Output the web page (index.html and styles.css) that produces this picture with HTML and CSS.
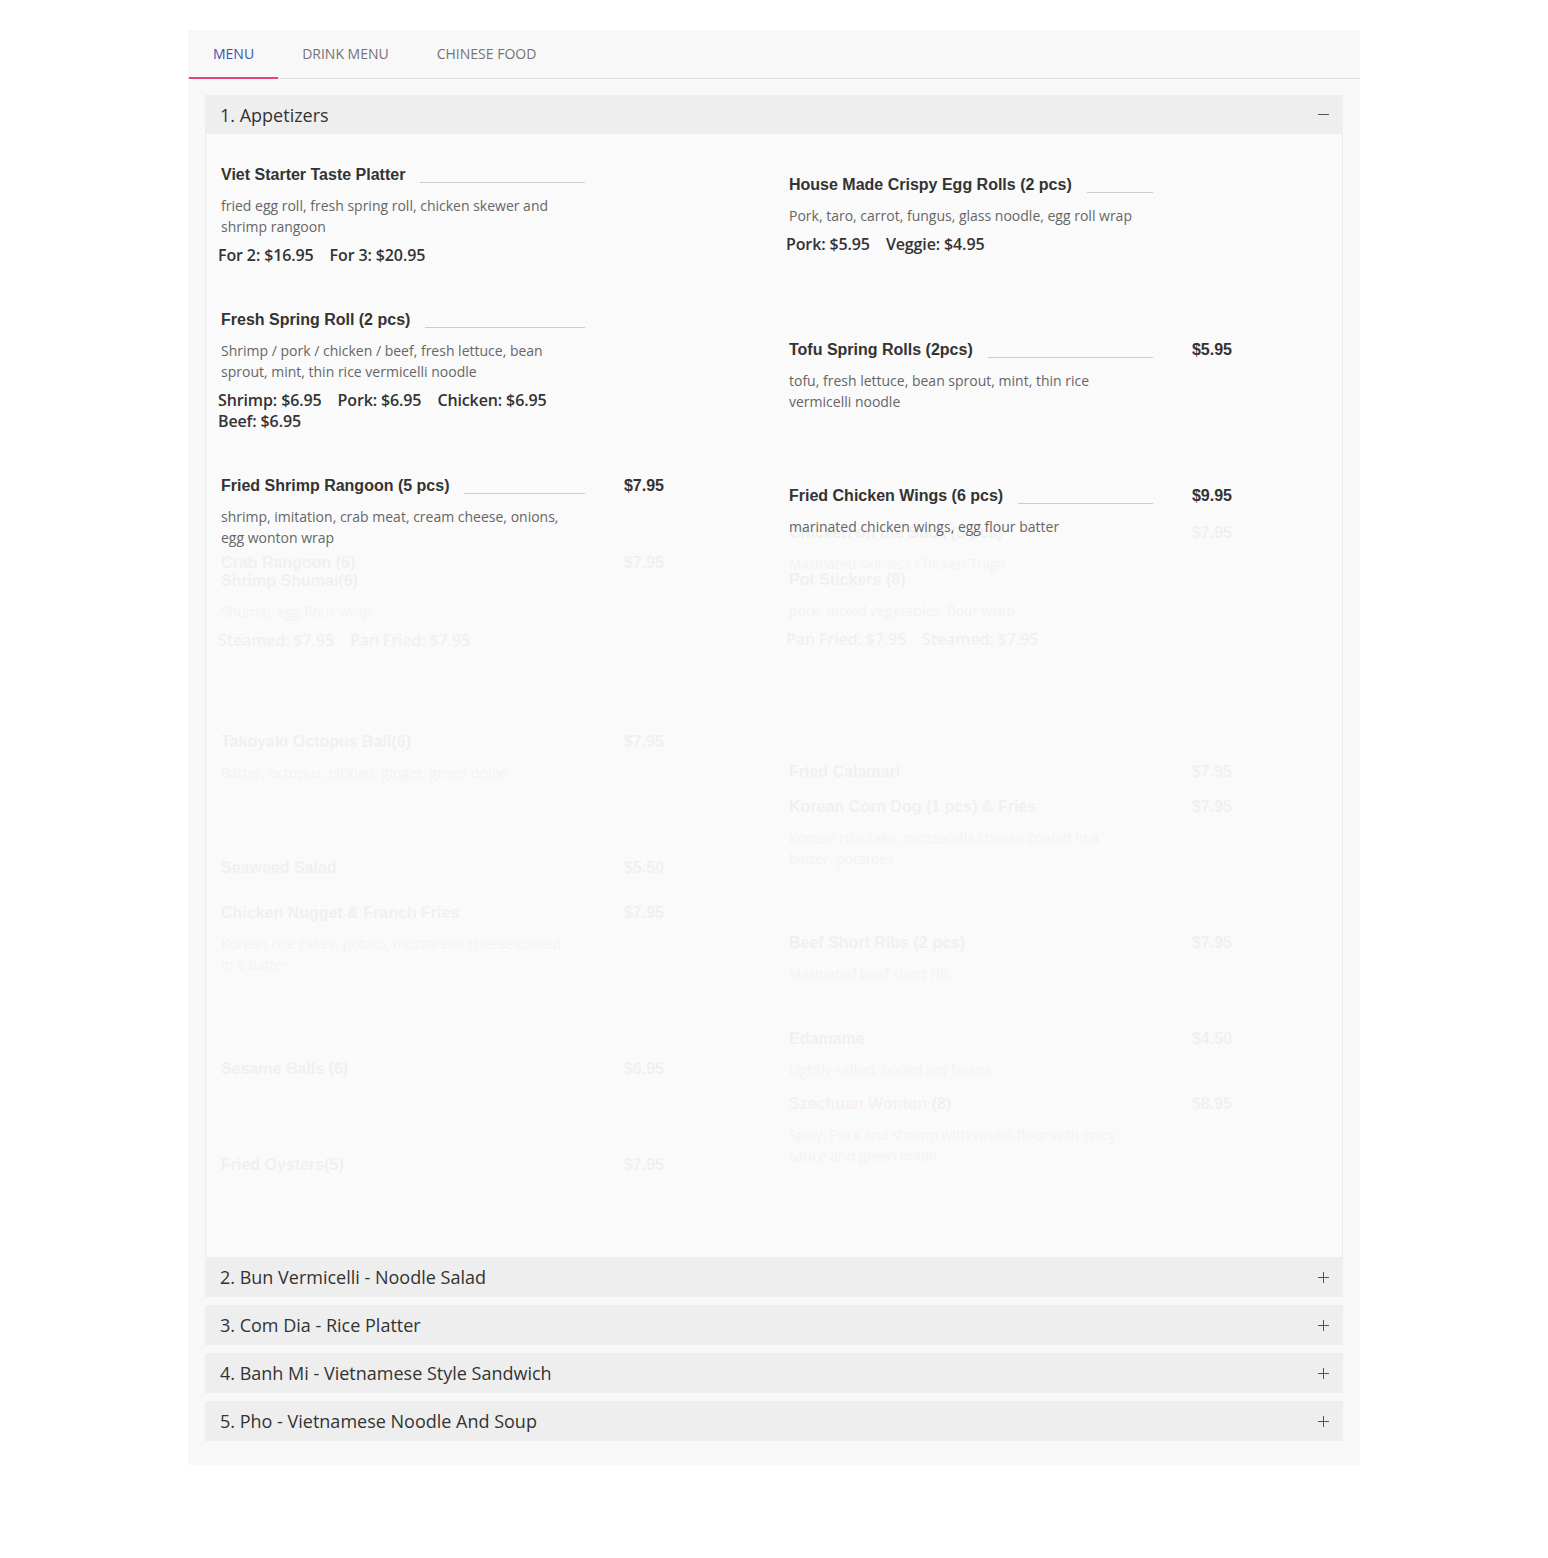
FILE: index.html
```html
<!DOCTYPE html>
<html lang="en">
<head>
    <meta charset="UTF-8">
    <meta name="viewport" content="width=device-width, initial-scale=1.0">
    <link rel="stylesheet" href="styles.css">
    <title>Menu</title>
</head>
<body>
    <div class="menu-box">
        <nav class="tabs">
            <a class="tab active" href="#">Menu</a>
            <a class="tab" href="#">Drink Menu</a>
            <a class="tab" href="#">Chinese Food</a>
        </nav>

        <div class="accordion">
            <div class="acc-head">
                <span>1. Appetizers</span>
                <svg class="acc-icon" width="11" height="11" viewBox="0 0 11 11"><path d="M0 5.5h11" stroke="#555" stroke-width="1"/></svg>
            </div>
            <div class="acc-body">
                <div class="col col-left">
                    <div class="item">
                        <div class="item-head">
                            <div class="item-title"><span class="item-name">Viet Starter Taste Platter</span><span class="item-line"></span></div>
                            <span class="item-price"></span>
                        </div>
                        <p class="item-desc">fried egg roll, fresh spring roll, chicken skewer and shrimp rangoon</p>
                        <div class="item-prices"><span>For 2: $16.95</span><span>For 3: $20.95</span></div>
                    </div>
                    <div class="item">
                        <div class="item-head">
                            <div class="item-title"><span class="item-name">Fresh Spring Roll (2 pcs)</span><span class="item-line"></span></div>
                            <span class="item-price"></span>
                        </div>
                        <p class="item-desc">Shrimp / pork / chicken / beef, fresh lettuce, bean sprout, mint, thin rice vermicelli noodle</p>
                        <div class="item-prices"><span>Shrimp: $6.95</span><span>Pork: $6.95</span><span>Chicken: $6.95</span><span>Beef: $6.95</span></div>
                    </div>
                    <div class="item">
                        <div class="item-head">
                            <div class="item-title"><span class="item-name">Fried Shrimp Rangoon (5 pcs)</span><span class="item-line"></span></div>
                            <span class="item-price">$7.95</span>
                        </div>
                        <p class="item-desc">shrimp, imitation, crab meat, cream cheese, onions, egg wonton wrap</p>
                    </div>
                    <div class="item faded">
                        <div class="item-head">
                            <div class="item-title"><span class="item-name">Crab Rangoon (6)</span></div>
                            <span class="item-price">$7.95</span>
                        </div>
                    </div>
                    <div class="item faded">
                        <div class="item-head">
                            <div class="item-title"><span class="item-name">Shrimp Shumai(6)</span></div>
                            <span class="item-price"></span>
                        </div>
                        <p class="item-desc">Shumai, egg flour wrap</p>
                        <div class="item-prices"><span>Steamed: $7.95</span><span>Pan Fried: $7.95</span></div>
                    </div>
                    <div class="item faded">
                        <div class="item-head">
                            <div class="item-title"><span class="item-name">Takoyaki Octopus Ball(6)</span></div>
                            <span class="item-price">$7.95</span>
                        </div>
                        <p class="item-desc">Batter, octopus, pickled, ginger, green onion</p>
                    </div>
                    <div class="item faded">
                        <div class="item-head">
                            <div class="item-title"><span class="item-name">Seaweed Salad</span></div>
                            <span class="item-price">$5.50</span>
                        </div>
                    </div>
                    <div class="item faded">
                        <div class="item-head">
                            <div class="item-title"><span class="item-name">Chicken Nugget &amp; Franch Fries</span></div>
                            <span class="item-price">$7.95</span>
                        </div>
                        <p class="item-desc">Korean rice cakes, potato, mozzarella cheese coated in a batter</p>
                    </div>
                    <div class="item faded">
                        <div class="item-head">
                            <div class="item-title"><span class="item-name">Sesame Balls (6)</span></div>
                            <span class="item-price">$6.95</span>
                        </div>
                    </div>
                    <div class="item faded">
                        <div class="item-head">
                            <div class="item-title"><span class="item-name">Fried Oysters(5)</span></div>
                            <span class="item-price">$7.95</span>
                        </div>
                    </div>
                </div>

                <div class="col col-right">
                    <div class="item">
                        <div class="item-head">
                            <div class="item-title"><span class="item-name">House Made Crispy Egg Rolls (2 pcs)</span><span class="item-line"></span></div>
                            <span class="item-price"></span>
                        </div>
                        <p class="item-desc">Pork, taro, carrot, fungus, glass noodle, egg roll wrap</p>
                        <div class="item-prices"><span>Pork: $5.95</span><span>Veggie: $4.95</span></div>
                    </div>
                    <div class="item">
                        <div class="item-head">
                            <div class="item-title"><span class="item-name">Tofu Spring Rolls (2pcs)</span><span class="item-line"></span></div>
                            <span class="item-price">$5.95</span>
                        </div>
                        <p class="item-desc">tofu, fresh lettuce, bean sprout, mint, thin rice vermicelli noodle</p>
                    </div>
                    <div class="item">
                        <div class="item-head">
                            <div class="item-title"><span class="item-name">Fried Chicken Wings (6 pcs)</span><span class="item-line"></span></div>
                            <span class="item-price">$9.95</span>
                        </div>
                        <p class="item-desc">marinated chicken wings, egg flour batter</p>
                    </div>
                    <div class="item faded">
                        <div class="item-head">
                            <div class="item-title"><span class="item-name">Chicken on the Stick (3 pcs)</span></div>
                            <span class="item-price">$7.95</span>
                        </div>
                        <p class="item-desc">Marinated skinless Chicken Thigh</p>
                    </div>
                    <div class="item faded">
                        <div class="item-head">
                            <div class="item-title"><span class="item-name">Pot Stickers (8)</span></div>
                            <span class="item-price"></span>
                        </div>
                        <p class="item-desc">pork, mixed vegetables, flour wrap</p>
                        <div class="item-prices"><span>Pan Fried: $7.95</span><span>Steamed: $7.95</span></div>
                    </div>
                    <div class="item faded">
                        <div class="item-head">
                            <div class="item-title"><span class="item-name">Fried Calamari</span></div>
                            <span class="item-price">$7.95</span>
                        </div>
                    </div>
                    <div class="item faded">
                        <div class="item-head">
                            <div class="item-title"><span class="item-name">Korean Corn Dog (1 pcs) &amp; Fries</span></div>
                            <span class="item-price">$7.95</span>
                        </div>
                        <p class="item-desc">Korean rice cake, mozzarella cheese coated in a batter, potatoes</p>
                    </div>
                    <div class="item faded">
                        <div class="item-head">
                            <div class="item-title"><span class="item-name">Beef Short Ribs (2 pcs)</span></div>
                            <span class="item-price">$7.95</span>
                        </div>
                        <p class="item-desc">Marinated beef short rib</p>
                    </div>
                    <div class="item faded">
                        <div class="item-head">
                            <div class="item-title"><span class="item-name">Edamame</span></div>
                            <span class="item-price">$4.50</span>
                        </div>
                        <p class="item-desc">Lightly salted, boiled soy beans</p>
                    </div>
                    <div class="item faded">
                        <div class="item-head">
                            <div class="item-title"><span class="item-name"><span class="spicy">Szechuan Wonton</span> (8)</span></div>
                            <span class="item-price">$8.95</span>
                        </div>
                        <p class="item-desc">Spicy. Pork and shrimp with wheat flour with spicy sauce and green onion</p>
                    </div>
                </div>
            </div>

            <div class="acc-head">
                <span>2. Bun Vermicelli - Noodle Salad</span>
                <svg class="acc-icon" width="11" height="11" viewBox="0 0 11 11"><path d="M0 5.5h11M5.5 0v11" stroke="#555" stroke-width="1"/></svg>
            </div>
            <div class="acc-head">
                <span>3. Com Dia - Rice Platter</span>
                <svg class="acc-icon" width="11" height="11" viewBox="0 0 11 11"><path d="M0 5.5h11M5.5 0v11" stroke="#555" stroke-width="1"/></svg>
            </div>
            <div class="acc-head">
                <span>4. Banh Mi - Vietnamese Style Sandwich</span>
                <svg class="acc-icon" width="11" height="11" viewBox="0 0 11 11"><path d="M0 5.5h11M5.5 0v11" stroke="#555" stroke-width="1"/></svg>
            </div>
            <div class="acc-head">
                <span>5. Pho - Vietnamese Noodle And Soup</span>
                <svg class="acc-icon" width="11" height="11" viewBox="0 0 11 11"><path d="M0 5.5h11M5.5 0v11" stroke="#555" stroke-width="1"/></svg>
            </div>
        </div>
    </div>
</body>
</html>
```

FILE: styles.css
```css
body {
    margin: 0;
    padding-top: 30px;
    background: #fff;
    font-family: "Open Sans", sans-serif;
    color: #333;
}

.menu-box {
    width: 1172px;
    margin: 0 auto;
    padding-bottom: 24px;
    background-color: #f8f8f8;
}

/* tabs */
.tabs {
    display: flex;
    height: 48px;
    border-bottom: 1px solid #ddd;
}

.tab {
    display: flex;
    align-items: center;
    padding: 0 24px;
    font-size: 14px;
    text-transform: uppercase;
    text-decoration: none;
    color: #737373;
    border-bottom: 2px solid transparent;
    margin-bottom: -1px;
}

.tab:first-child {
    margin-left: 1px;
}

.tab.active {
    color: #3f51b5;
    border-bottom-color: #ec407a;
}

/* accordion */
.accordion {
    padding: 16px 17px 0;
}

.acc-head {
    display: flex;
    align-items: center;
    justify-content: space-between;
    height: 40px;
    padding: 0 14px 0 15px;
    background-color: #eee;
    font-size: 18px;
    color: #333;
}

.acc-head:first-child {
    height: 39px;
}

.acc-head + .acc-head {
    margin-top: 8px;
}

.acc-icon {
    display: block;
}

.acc-body {
    display: flex;
    padding-bottom: 82px;
    background-color: #fafafa;
    border-left: 1px solid #ebebeb;
    border-right: 1px solid #ebebeb;
}

.col {
    width: 50%;
    padding: 31px 0 0 15px;
}

.col-right {
    padding-top: 41px;
}

/* menu items */
.item {
    width: 443px;
}

.item-head {
    display: flex;
    align-items: flex-start;
    height: 20px;
}

.item-title {
    display: flex;
    align-items: flex-start;
    width: 364px;
}

.item-name {
    font-family: "Liberation Sans", Arial, sans-serif;
    font-weight: bold;
    font-size: 16px;
    line-height: 20px;
    white-space: nowrap;
    color: #333;
}

.item-line {
    flex: 1;
    height: 17px;
    margin-left: 15px;
    border-bottom: 1px solid #ccc;
}

.item-price {
    flex: 1;
    text-align: right;
    font-family: "Liberation Sans", Arial, sans-serif;
    font-weight: bold;
    font-size: 16px;
    line-height: 20px;
    color: #333;
}

.item-desc {
    width: 360px;
    margin: 10px 0 0;
    font-size: 14px;
    line-height: 21px;
    color: #666;
}

.item-prices {
    display: flex;
    flex-wrap: wrap;
    width: 370px;
    margin: 8px 0 0 -3px;
    font-size: 16px;
    font-weight: 600;
    line-height: 21px;
    letter-spacing: -0.12px;
    color: #333;
}

.item-prices span {
    margin-right: 16px;
}

.faded {
    opacity: 0.045;
}

.faded .item-desc {
    width: 350px;
}

.spicy {
    color: #d32f2f;
}

.col-left .item:nth-child(2),
.col-left .item:nth-child(3) { margin-top: 44px; }
.col-left .item:nth-child(4) { margin-top: 5px; }
.col-left .item:nth-child(5) { margin-top: -2px; }
.col-left .item:nth-child(6) { margin-top: 81px; }
.col-left .item:nth-child(7) { margin-top: 75px; }
.col-left .item:nth-child(8) { margin-top: 25px; }
.col-left .item:nth-child(9) { margin-top: 84px; }
.col-left .item:nth-child(10) { margin-top: 76px; }

.col-right .item:nth-child(2) { margin-top: 85px; }
.col-right .item:nth-child(3) { margin-top: 74px; }
.col-right .item:nth-child(4) { margin-top: -14px; }
.col-right .item:nth-child(5) { margin-top: -4px; }
.col-right .item:nth-child(6) { margin-top: 112px; }
.col-right .item:nth-child(7) { margin-top: 15px; }
.col-right .item:nth-child(8) { margin-top: 64px; }
.col-right .item:nth-child(9) { margin-top: 45px; }
.col-right .item:nth-child(10) { margin-top: 14px; }
```
